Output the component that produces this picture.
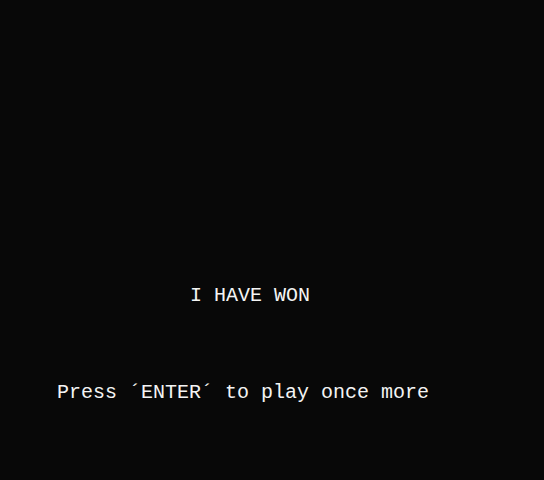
export default function App() {
  return (
    <div className="h-[480px] w-full bg-[#080808] text-[#f4f4f4] font-['Liberation_Mono',monospace] text-[20px] leading-[20px]">
      <div className="pt-[286px] pl-[190px]">I HAVE WON</div>
      <div className="pt-[77px] pl-[57px] whitespace-pre">Press ´ENTER´ to play once more</div>
    </div>
  );
}
